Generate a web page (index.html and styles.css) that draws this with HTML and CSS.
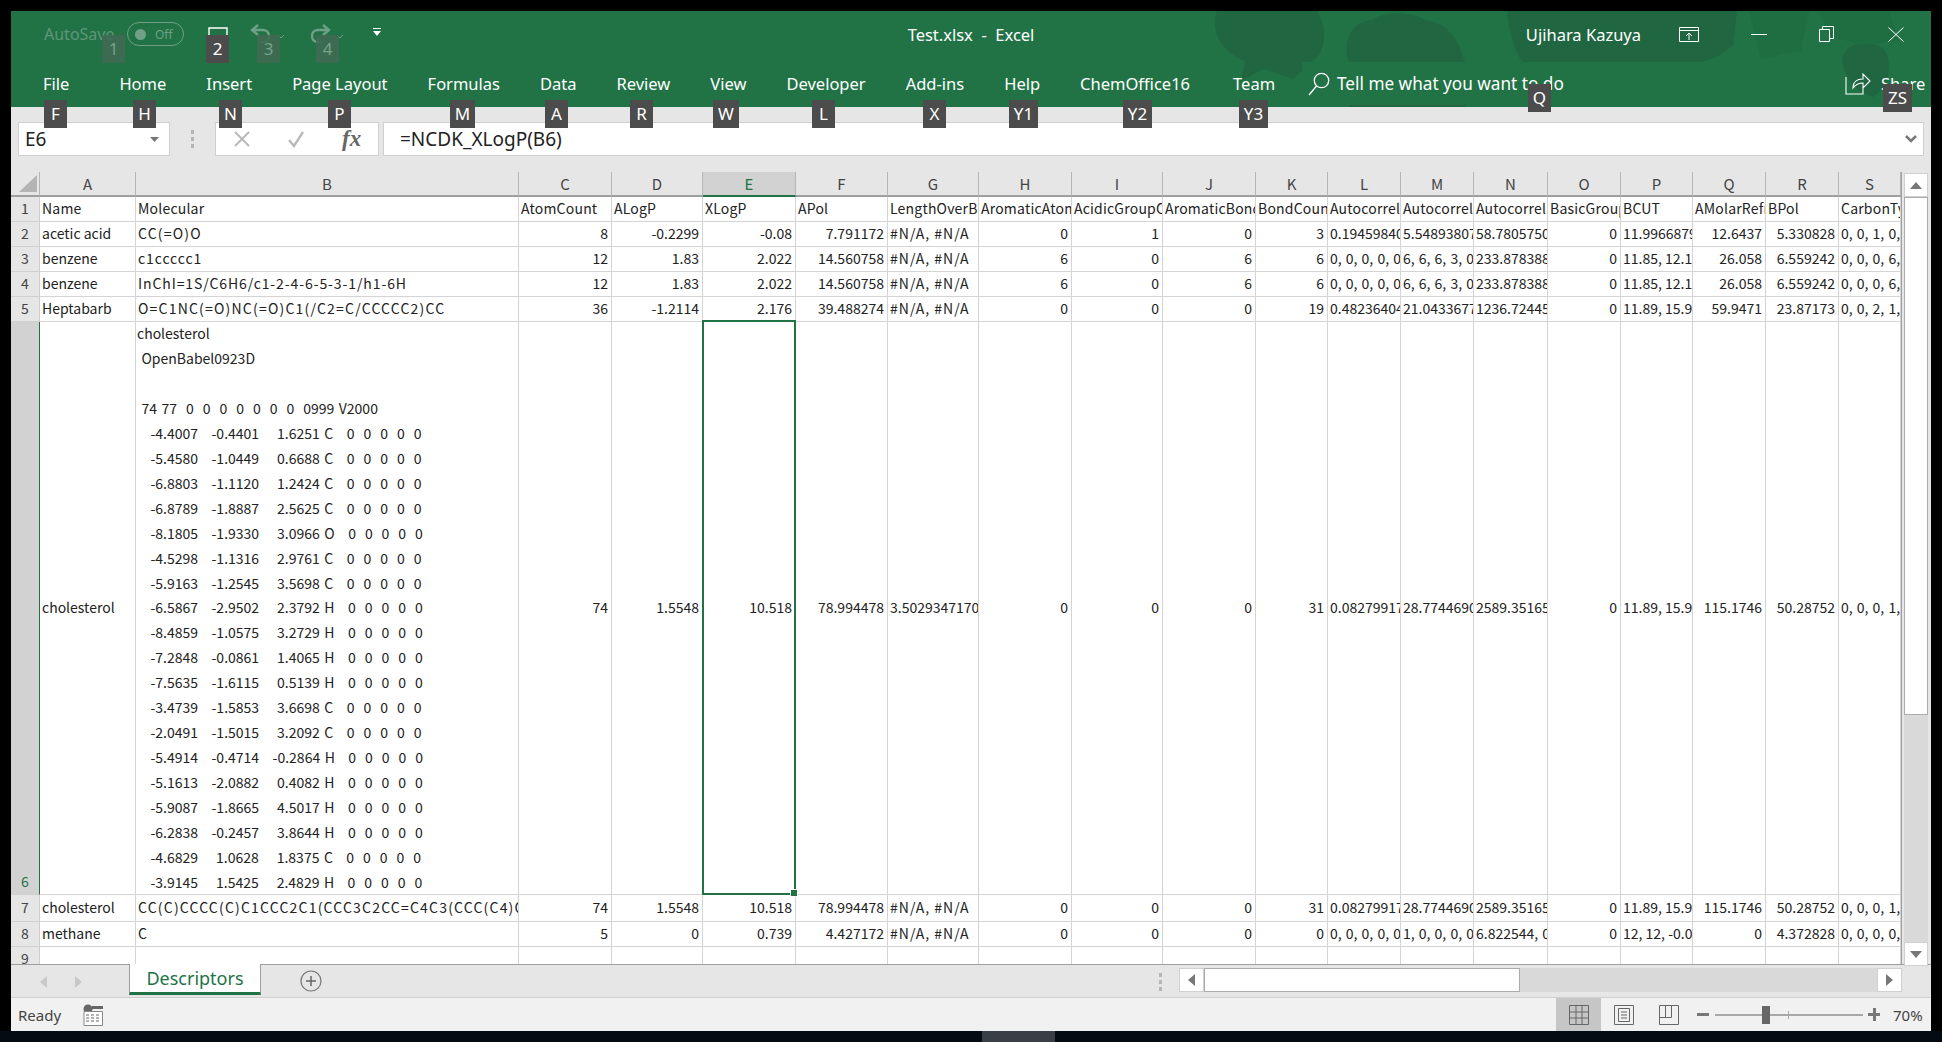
FILE: index.html
```html
<!DOCTYPE html>
<html lang="en">
<head>
    <meta charset="UTF-8">
    <title>Test.xlsx - Excel</title>
    <link rel="stylesheet" href="styles.css">
</head>
<body>
    <div class="window">
        <!-- Ribbon -->
        <header class="ribbon">
            <svg class="clouds" width="720" height="96" viewBox="0 0 720 96">
                <path d="M8 0h100c8 12 10 30 2 44l-26 24-30-10-22 12 4-20C14 42 0 20 8 0z"/>
                <path d="M140 51c-8-22 4-42 24-42 8-9 40-9 52 0 18 2 32 14 40 42v45H140z"/>
                <path d="M298 0h230l-4 34c-14 14-30 18-46 18H314c-10-14-14-34-16-52z"/>
                <path d="M634 44c6-14 32-16 42-4 8 12 4 36-12 46-16-4-34-24-30-42z"/>
                <path class="cloud-light" d="M540 0h60l-8 40-40 8zM610 0h70l10 30-40 4-30-10z"/>
            </svg>
            <div class="title-row">
                <div class="quick-access">
                    <span class="autosave">AutoSave</span>
                    <span class="toggle"><i class="toggle-dot"></i>Off</span>
                    <svg class="qa-save" width="20" height="20" viewBox="0 0 20 20"><path d="M1 19V1h18v18" fill="none" stroke="#fff" stroke-width="1.4"/></svg>
                    <svg class="qa-undo" width="24" height="24" viewBox="0 0 24 24"><path d="M9 3 3 8l6 5M3 8h11c4 0 6 3 6 6s-2 6-6 6h-3" fill="none" stroke="#6fa085" stroke-width="2.4"/></svg>
                    <svg class="qa-chev" width="8" height="5" viewBox="0 0 8 5"><path d="m1 1 3 3 3-3" fill="none" stroke="#6fa085"/></svg>
                    <svg class="qa-redo" width="24" height="24" viewBox="0 0 24 24"><path d="m15 3 6 5-6 5M21 8H10c-4 0-6 3-6 6s2 6 6 6h3" fill="none" stroke="#6fa085" stroke-width="2.4"/></svg>
                    <svg class="qa-chev" width="8" height="5" viewBox="0 0 8 5"><path d="m1 1 3 3 3-3" fill="none" stroke="#6fa085"/></svg>
                    <svg class="qa-more" width="8" height="8" viewBox="0 0 8 8"><path d="M0 0h8v1H0zM0 3h8L4 8z" fill="#fff"/></svg>
                </div>
                <div class="doc-title">Test.xlsx&nbsp; -&nbsp; Excel</div>
                <div class="window-controls">
                    <span class="user-name">Ujihara Kazuya</span>
                    <svg class="ctl-display" width="20" height="15" viewBox="0 0 20 15"><path d="M.5.5h19v14H.5zM.5 3.5h19M10 13V6M7 9l3-3 3 3" fill="none" stroke="#fff"/></svg>
                    <svg class="ctl-min" width="16" height="1" viewBox="0 0 16 1"><path d="M0 .5h16" stroke="#fff"/></svg>
                    <svg class="ctl-restore" width="15" height="16" viewBox="0 0 15 16"><path d="M.5 3.5h10v12H.5zM3.5 3.5v-3h11v12h-4" fill="none" stroke="#fff"/></svg>
                    <svg class="ctl-close" width="16" height="15" viewBox="0 0 16 15"><path d="m.5.5 15 14M15.5.5l-15 14" fill="none" stroke="#fff"/></svg>
                </div>
            </div>
            <nav class="tab-row">
                <a class="tab tab-file">File</a>
                <a class="tab">Home</a>
                <a class="tab">Insert</a>
                <a class="tab">Page Layout</a>
                <a class="tab">Formulas</a>
                <a class="tab">Data</a>
                <a class="tab">Review</a>
                <a class="tab">View</a>
                <a class="tab">Developer</a>
                <a class="tab">Add-ins</a>
                <a class="tab">Help</a>
                <a class="tab">ChemOffice16</a>
                <a class="tab tab-team">Team</a>
                <div class="tell-me">
                    <svg width="22" height="24" viewBox="0 0 22 24"><circle cx="13.5" cy="8.5" r="7.2" fill="none" stroke="#fff" stroke-width="1.3"/><path d="M8.5 14 1 23" stroke="#fff" stroke-width="1.3"/></svg>
                    <span>Tell me what you want to do</span>
                </div>
                <div class="share">
                    <svg width="26" height="24" viewBox="0 0 26 24"><path d="M1 6v17h17v-6M8 17c0-6 4-9 10-9V3l7 7-7 7v-5c-4 0-7 1-10 5z" fill="none" stroke="#fff" stroke-width="1.1"/></svg>
                    <span>Share</span>
                </div>
            </nav>
        </header>

        <!-- Key tips -->
        <span class="tip tip-off tip-top tip-1">1</span>
        <span class="tip tip-top tip-2">2</span>
        <span class="tip tip-off tip-top tip-3">3</span>
        <span class="tip tip-off tip-top tip-4">4</span>
        <span class="tip tip-mid tip-f">F</span>
        <span class="tip tip-mid tip-h">H</span>
        <span class="tip tip-mid tip-n">N</span>
        <span class="tip tip-mid tip-p">P</span>
        <span class="tip tip-mid tip-m">M</span>
        <span class="tip tip-mid tip-a">A</span>
        <span class="tip tip-mid tip-r">R</span>
        <span class="tip tip-mid tip-w">W</span>
        <span class="tip tip-mid tip-l">L</span>
        <span class="tip tip-mid tip-x">X</span>
        <span class="tip tip-mid tip-y1">Y1</span>
        <span class="tip tip-mid tip-y2">Y2</span>
        <span class="tip tip-mid tip-y3">Y3</span>
        <span class="tip tip-high tip-q">Q</span>
        <span class="tip tip-high tip-zs">ZS</span>

        <!-- Formula bar -->
        <div class="formula-bar">
            <div class="name-box">E6<svg width="9" height="5" viewBox="0 0 9 5"><path d="M0 0h9L4.500 5z" fill="#777"/></svg></div>
            <div class="grip"><i></i><i></i><i></i></div>
            <div class="fx-box">
                <svg width="18" height="18" viewBox="0 0 18 18"><path d="m2 2 14 14M16 2 2 16" stroke="#b9b9b9" stroke-width="2"/></svg>
                <svg width="18" height="18" viewBox="0 0 18 18"><path d="m2 10 5 6L16 2" fill="none" stroke="#b9b9b9" stroke-width="2.400"/></svg>
                <span class="fx">fx</span>
            </div>
            <div class="formula-input">=NCDK_XLogP(B6)<svg width="12" height="8" viewBox="0 0 12 8"><path d="m1 1 5 5 5-5" fill="none" stroke="#777" stroke-width="2.500"/></svg></div>
        </div>

        <!-- Sheet -->
        <div class="sheet">
            <div class="grid-wrap">
                <table class="grid">
                    <colgroup>
                        <col class="w-head"><col class="w-a"><col class="w-b"><col class="w-c"><col class="w-d">
                        <col class="w-e"><col class="w-f"><col class="w-g"><col class="w-h"><col class="w-i">
                        <col class="w-j"><col class="w-k"><col class="w-l"><col class="w-m"><col class="w-n">
                        <col class="w-o"><col class="w-p"><col class="w-q"><col class="w-r"><col class="w-s">
                    </colgroup>
                    <thead>
                        <tr class="row-cols">
                            <th class="corner"><svg width="18" height="17" viewBox="0 0 18 17"><path d="M18 0v17H0z" fill="#b4b4b4"/></svg></th>
                            <th>A</th><th>B</th><th>C</th><th>D</th><th class="col-active">E</th><th>F</th><th>G</th><th>H</th><th>I</th>
                            <th>J</th><th>K</th><th>L</th><th>M</th><th>N</th><th>O</th><th>P</th><th>Q</th><th>R</th><th>S</th>
                        </tr>
                    </thead>
                    <tbody>
                        <tr class="row-labels">
                            <th>1</th><td>Name</td><td>Molecular</td><td>AtomCount</td><td>ALogP</td><td>XLogP</td><td>APol</td><td>LengthOverBreadth</td><td>AromaticAtomCount</td><td>AcidicGroupCount</td>
                            <td>AromaticBondCount</td><td>BondCount</td><td>Autocorrelation</td><td>Autocorrelation</td><td>Autocorrelation</td><td>BasicGroupCount</td><td>BCUT</td><td>AMolarRefractivity</td><td>BPol</td><td>CarbonTypes</td>
                        </tr>
                        <tr>
                            <th>2</th><td>acetic acid</td><td class="smiles">CC(=O)O</td><td class="num">8</td><td class="num">-0.2299</td><td class="num">-0.08</td><td class="num">7.791172</td><td class="na">#N/A, #N/A</td><td class="num">0</td><td class="num">1</td>
                            <td class="num">0</td><td class="num">3</td><td>0.19459840</td><td>5.54893807</td><td>58.7805750</td><td class="num">0</td><td>11.9966879</td><td class="num">12.6437</td><td class="num">5.330828</td><td class="list">0, 0, 1, 0, 0</td>
                        </tr>
                        <tr>
                            <th>3</th><td>benzene</td><td class="smiles-thin">c1ccccc1</td><td class="num">12</td><td class="num">1.83</td><td class="num">2.022</td><td class="num">14.560758</td><td class="na">#N/A, #N/A</td><td class="num">6</td><td class="num">0</td>
                            <td class="num">6</td><td class="num">6</td><td class="list">0, 0, 0, 0, 0</td><td class="list">6, 6, 6, 3, 0</td><td>233.878388</td><td class="num">0</td><td>11.85, 12.15</td><td class="num">26.058</td><td class="num">6.559242</td><td class="list">0, 0, 0, 6, 0</td>
                        </tr>
                        <tr>
                            <th>4</th><td>benzene</td><td class="smiles-thin">InChI=1S/C6H6/c1-2-4-6-5-3-1/h1-6H</td><td class="num">12</td><td class="num">1.83</td><td class="num">2.022</td><td class="num">14.560758</td><td class="na">#N/A, #N/A</td><td class="num">6</td><td class="num">0</td>
                            <td class="num">6</td><td class="num">6</td><td class="list">0, 0, 0, 0, 0</td><td class="list">6, 6, 6, 3, 0</td><td>233.878388</td><td class="num">0</td><td>11.85, 12.15</td><td class="num">26.058</td><td class="num">6.559242</td><td class="list">0, 0, 0, 6, 0</td>
                        </tr>
                        <tr>
                            <th>5</th><td>Heptabarb</td><td class="smiles">O=C1NC(=O)NC(=O)C1(/C2=C/CCCCC2)CC</td><td class="num">36</td><td class="num">-1.2114</td><td class="num">2.176</td><td class="num">39.488274</td><td class="na">#N/A, #N/A</td><td class="num">0</td><td class="num">0</td>
                            <td class="num">0</td><td class="num">19</td><td>0.48236404</td><td>21.0433677</td><td>1236.72445</td><td class="num">0</td><td>11.89, 15.99</td><td class="num">59.9471</td><td class="num">23.87173</td><td class="list">0, 0, 2, 1, 0</td>
                        </tr>
                        <tr class="row-tall">
                            <th class="row-active">6</th><td>cholesterol</td>
                            <td class="molfile"><div class="molfile-text">cholesterol
 OpenBabel0923D

 74 77  0  0  0  0  0  0  0  0999 V2000
   -4.4007   -0.4401    1.6251 C   0  0  0  0  0
   -5.4580   -1.0449    0.6688 C   0  0  0  0  0
   -6.8803   -1.1120    1.2424 C   0  0  0  0  0
   -6.8789   -1.8887    2.5625 C   0  0  0  0  0
   -8.1805   -1.9330    3.0966 O   0  0  0  0  0
   -4.5298   -1.1316    2.9761 C   0  0  0  0  0
   -5.9163   -1.2545    3.5698 C   0  0  0  0  0
   -6.5867   -2.9502    2.3792 H   0  0  0  0  0
   -8.4859   -1.0575    3.2729 H   0  0  0  0  0
   -7.2848   -0.0861    1.4065 H   0  0  0  0  0
   -7.5635   -1.6115    0.5139 H   0  0  0  0  0
   -3.4739   -1.5853    3.6698 C   0  0  0  0  0
   -2.0491   -1.5015    3.2092 C   0  0  0  0  0
   -5.4914   -0.4714   -0.2864 H   0  0  0  0  0
   -5.1613   -2.0882    0.4082 H   0  0  0  0  0
   -5.9087   -1.8665    4.5017 H   0  0  0  0  0
   -6.2838   -0.2457    3.8644 H   0  0  0  0  0
   -4.6829    1.0628    1.8375 C   0  0  0  0  0
   -3.9145    1.5425    2.4829 H   0  0  0  0  0</div></td>
                            <td class="num">74</td><td class="num">1.5548</td>
                            <td class="num cell-active">10.518<span class="selection"><i class="fill-handle"></i></span></td>
                            <td class="num">78.994478</td><td>3.50293471700</td><td class="num">0</td><td class="num">0</td>
                            <td class="num">0</td><td class="num">31</td><td>0.08279917</td><td>28.7744690</td><td>2589.35165</td><td class="num">0</td><td>11.89, 15.99</td><td class="num">115.1746</td><td class="num">50.28752</td><td class="list">0, 0, 0, 1, 0</td>
                        </tr>
                        <tr class="row-seven">
                            <th>7</th><td>cholesterol</td><td class="smiles">CC(C)CCCC(C)C1CCC2C1(CCC3C2CC=C4C3(CCC(C4)O)C)C</td><td class="num">74</td><td class="num">1.5548</td><td class="num">10.518</td><td class="num">78.994478</td><td class="na">#N/A, #N/A</td><td class="num">0</td><td class="num">0</td>
                            <td class="num">0</td><td class="num">31</td><td>0.08279917</td><td>28.7744690</td><td>2589.35165</td><td class="num">0</td><td>11.89, 15.99</td><td class="num">115.1746</td><td class="num">50.28752</td><td class="list">0, 0, 0, 1, 0</td>
                        </tr>
                        <tr>
                            <th>8</th><td>methane</td><td>C</td><td class="num">5</td><td class="num">0</td><td class="num">0.739</td><td class="num">4.427172</td><td class="na">#N/A, #N/A</td><td class="num">0</td><td class="num">0</td>
                            <td class="num">0</td><td class="num">0</td><td class="list">0, 0, 0, 0, 0</td><td class="list">1, 0, 0, 0, 0</td><td class="list">6.822544, 0</td><td class="num">0</td><td>12, 12, -0.01</td><td class="num">0</td><td class="num">4.372828</td><td class="list">0, 0, 0, 0, 0</td>
                        </tr>
                        <tr>
                            <th>9</th><td></td><td></td><td></td><td></td><td></td><td></td><td></td><td></td><td></td>
                            <td></td><td></td><td></td><td></td><td></td><td></td><td></td><td></td><td></td><td></td>
                        </tr>
                    </tbody>
                </table>
            </div>
            <div class="v-scroll">
                <div class="scroll-btn"><svg width="12" height="7" viewBox="0 0 12 7"><path d="M6 0l6 7H0z" fill="#777"/></svg></div>
                <div class="v-thumb"></div>
                <div class="v-track"></div>
                <div class="scroll-btn"><svg width="12" height="7" viewBox="0 0 12 7"><path d="M0 0h12L6 7z" fill="#777"/></svg></div>
            </div>
        </div>

        <!-- Sheet tabs -->
        <div class="sheet-bar">
            <div class="sheet-nav">
                <svg width="7" height="12" viewBox="0 0 7 12"><path d="M7 0v12L0 6z" fill="#c9c9c9"/></svg>
                <svg width="7" height="12" viewBox="0 0 7 12"><path d="M0 0v12l7-6z" fill="#c9c9c9"/></svg>
            </div>
            <div class="sheet-tab">Descriptors</div>
            <svg class="add-sheet" width="22" height="22" viewBox="0 0 22 22"><circle cx="11" cy="11" r="10" fill="none" stroke="#777" stroke-width="1.200"/><path d="M11 6v10M6 11h10" stroke="#666" stroke-width="1.500"/></svg>
            <div class="grip grip-bar"><i></i><i></i><i></i></div>
            <div class="h-scroll">
                <div class="scroll-btn-h"><svg width="7" height="12" viewBox="0 0 7 12"><path d="M7 0v12L0 6z" fill="#777"/></svg></div>
                <div class="h-thumb"></div>
                <div class="h-track"></div>
                <div class="scroll-btn-h"><svg width="7" height="12" viewBox="0 0 7 12"><path d="M0 0v12l7-6z" fill="#777"/></svg></div>
            </div>
        </div>

        <!-- Status bar -->
        <footer class="status-bar">
            <span class="ready">Ready</span>
            <svg class="macro-icon" width="20" height="22" viewBox="0 0 20 22"><circle cx="5" cy="5" r="4.500" fill="#666"/><path d="M9 2h11v3H9z" fill="#666"/><path d="M1 7.500h18.500v14H1z" fill="#fff" stroke="#888"/><path d="M3 11h3M8 11h3M13 11h3M3 14h3M8 14h3M13 14h3M3 17h3M8 17h3M13 17h3" stroke="#666"/></svg>
            <div class="status-right">
                <div class="view-btn view-active"><svg width="20" height="20" viewBox="0 0 20 20"><path d="M.5.5h19v19H.5zM.5 7h19M.5 13h19M7 .5v19M13 .5v19" fill="none" stroke="#666"/></svg></div>
                <div class="view-btn"><svg width="20" height="20" viewBox="0 0 20 20"><path d="M.5.5h19v19H.5zM4.500 3.500h11v13h-11zM7 7h6M7 10h6M7 13h6" fill="none" stroke="#666"/></svg></div>
                <div class="view-btn"><svg width="20" height="20" viewBox="0 0 20 20"><path d="M.5.5h19v19H.5zM.5 12.500h12V.5M6.500.5v12" fill="none" stroke="#666"/></svg></div>
                <div class="zoom-slider">
                    <i class="zoom-minus"></i>
                    <div class="zoom-track"><i class="zoom-tick"></i><i class="zoom-thumb"></i></div>
                    <i class="zoom-plus"></i>
                </div>
                <span class="zoom-value">70%</span>
            </div>
        </footer>
    </div>

    <!-- Taskbar strip below the window -->
    <div class="taskbar"><i class="taskbar-app"></i><span class="taskbar-clock">12:44 PM</span></div>
</body>
</html>
```

FILE: styles.css
```css
/* General Styles */
html, body {
    margin: 0;
    padding: 0;
    height: 1042px;
    overflow: hidden;
    background-color: #000;
}

body {
    font-family: "Noto Sans", Arial, sans-serif;
    color: #222;
}

.window {
    position: relative;
    margin: 11px 11px 0;
    width: 1920px;
    height: 1020px;
    background-color: #e6e6e6;
    display: flex;
    flex-direction: column;
    overflow: hidden;
}

/* Ribbon */
.ribbon {
    position: relative;
    height: 96px;
    flex: none;
    background-color: #217346;
    color: #fff;
    overflow: hidden;
}

.clouds {
    position: absolute;
    top: 0;
    left: 1198px;
    fill: #1f5f3e;
    opacity: .6;
}

.clouds .cloud-light {
    fill: #1f6b41;
}

.title-row {
    position: relative;
    height: 51px;
    box-sizing: border-box;
    padding-bottom: 5px;
    display: flex;
    align-items: center;
}

.quick-access, .window-controls {
    flex: 1;
    display: flex;
    align-items: center;
}

.quick-access {
    padding-left: 33px;
}

.autosave {
    font-size: 16px;
    color: #5f9679;
    width: 83px;
}

.toggle {
    width: 57px;
    height: 24px;
    box-sizing: border-box;
    border: 1px solid #6fa085;
    border-radius: 12px;
    display: flex;
    align-items: center;
    gap: 9px;
    padding-left: 7px;
    font-size: 12px;
    color: #6fa085;
}

.toggle-dot {
    width: 11px;
    height: 11px;
    border-radius: 50%;
    background-color: #6fa085;
}

.qa-save {
    margin-left: 24px;
    margin-top: 6px;
}

.qa-undo {
    margin-left: 21px;
}

.qa-redo {
    margin-left: 23px;
}

.qa-chev {
    margin-left: 4px;
    margin-top: 4px;
}

.qa-more {
    margin-left: 29px;
    margin-top: -4px;
}

.doc-title {
    font-size: 16.500px;
    white-space: nowrap;
    margin-left: -6px;
}

.window-controls {
    justify-content: flex-end;
    padding-right: 27px;
}

.user-name {
    font-size: 16.500px;
    margin-right: 38px;
}

.ctl-min {
    margin-left: 52px;
}

.ctl-restore {
    margin-left: 52px;
}

.ctl-close {
    margin-left: 54px;
}

.tab-row {
    position: relative;
    height: 45px;
    display: flex;
    align-items: center;
    gap: 40px;
    padding-left: 32px;
    padding-bottom: 2px;
    box-sizing: border-box;
    font-size: 16.500px;
}

.tab {
    white-space: nowrap;
}

.tab-file {
    margin-right: 10px;
}

.tab-team {
    margin-left: 3px;
}

.tell-me {
    position: absolute;
    left: 1291px;
    top: 0;
    width: 450px;
    height: 43px;
    padding-bottom: 0;
    background-color: #217346;
    display: flex;
    align-items: center;
    gap: 7px;
    padding-left: 6px;
    box-sizing: border-box;
    font-size: 17.200px;
}

.share {
    position: absolute;
    left: 1834px;
    top: 9px;
    display: flex;
    align-items: center;
    gap: 10px;
}

/* Key tips */
.tip {
    position: absolute;
    height: 28px;
    background-color: #4c4c4c;
    color: #fff;
    font-size: 17px;
    line-height: 27px;
    text-align: center;
}

.tip-off {
    background-color: #3f6b54;
    color: #7fa892;
    opacity: .9;
}

.tip-top { top: 24px; }
.tip-mid { top: 89px; }
.tip-high { top: 73px; }

.tip-1 { left: 91px; width: 23px; }
.tip-2 { left: 195px; width: 23px; }
.tip-3 { left: 246px; width: 23px; }
.tip-4 { left: 305px; width: 23px; }
.tip-f { left: 33px; width: 23px; }
.tip-h { left: 122px; width: 23px; }
.tip-n { left: 208px; width: 23px; }
.tip-p { left: 317px; width: 23px; }
.tip-m { left: 439px; width: 25px; }
.tip-a { left: 534px; width: 23px; }
.tip-r { left: 619px; width: 23px; }
.tip-w { left: 702px; width: 26px; }
.tip-l { left: 801px; width: 23px; }
.tip-x { left: 912px; width: 23px; }
.tip-y1 { left: 998px; width: 29px; }
.tip-y2 { left: 1112px; width: 29px; }
.tip-y3 { left: 1228px; width: 29px; }
.tip-q { left: 1517px; width: 23px; }
.tip-zs { left: 1872px; width: 29px; }

/* Formula bar */
.formula-bar {
    height: 65px;
    flex: none;
    box-sizing: border-box;
    padding: 15px 7px 16px;
    display: flex;
    align-items: stretch;
}

.name-box, .fx-box, .formula-input {
    box-sizing: border-box;
    background-color: #fff;
    border: 1px solid #cfcfcf;
    display: flex;
    align-items: center;
}

.name-box {
    width: 152px;
    padding: 0 10px 0 6px;
    justify-content: space-between;
    font-size: 19px;
}

.grip {
    width: 45px;
    display: flex;
    flex-direction: column;
    align-items: center;
    justify-content: center;
    gap: 3px;
}

.grip i {
    width: 3px;
    height: 4px;
    background-color: #b5b5b5;
}

.fx-box {
    width: 164px;
    padding-left: 17px;
    gap: 36px;
}

.fx {
    font-family: "Liberation Serif", serif;
    font-style: italic;
    font-weight: bold;
    font-size: 23px;
    color: #666;
    margin-left: 1px;
}

.formula-input {
    flex: 1;
    margin-left: 4px;
    padding: 0 6px 0 16px;
    justify-content: space-between;
    font-size: 19px;
}

/* Sheet */
.sheet {
    height: 792px;
    flex: none;
    display: flex;
}

.grid-wrap {
    width: 1890px;
    height: 792px;
    overflow: hidden;
    border-right: 1px solid #9f9f9f;
}

.grid {
    table-layout: fixed;
    width: 1890px;
    border-collapse: separate;
    border-spacing: 0;
    font-family: "Noto Sans CJK JP", sans-serif;
    font-size: 14px;
    color: #222;
}

.w-head { width: 29px; }
.w-a { width: 96px; }
.w-b { width: 383px; }
.w-c { width: 93px; }
.w-d { width: 91px; }
.w-e { width: 93px; }
.w-f { width: 92px; }
.w-g { width: 91px; }
.w-h { width: 93px; }
.w-i { width: 91px; }
.w-j { width: 93px; }
.w-k { width: 72px; }
.w-l { width: 73px; }
.w-m { width: 73px; }
.w-n { width: 74px; }
.w-o { width: 73px; }
.w-p { width: 72px; }
.w-q { width: 73px; }
.w-r { width: 73px; }
.w-s { width: 62px; }

.grid tr {
    height: 25px;
}

.grid th, .grid td {
    box-sizing: border-box;
    padding: 0 3px 2px 2px;
    overflow: hidden;
    white-space: nowrap;
    line-height: 22px;
    border-right: 1px solid #d4d4d4;
    border-bottom: 1px solid #d4d4d4;
    background-color: #fff;
    text-align: left;
    vertical-align: middle;
    font-weight: normal;
}

.grid th {
    background-color: #e6e6e6;
    text-align: center;
    color: #444;
    padding: 0 0 2px;
    border-color: #cfcfcf;
}

.grid thead th {
    border-right-color: #b5b5b5;
    border-bottom: 2px solid #9f9f9f;
    font-size: 15px;
    padding: 0;
    line-height: 23px;
}

.grid .corner {
    text-align: right;
    padding-right: 2px;
    line-height: 0;
}

.grid .col-active {
    background-color: #d2d2d2;
    color: #217346;
    border-bottom-color: #217346;
}

.grid .row-labels td {
    letter-spacing: .2px;
}

.grid td.num {
    text-align: right;
}

.grid td.smiles {
    letter-spacing: 1.200px;
}

.grid td.smiles-thin {
    letter-spacing: .9px;
}

.grid td.na {
    letter-spacing: 1px;
}

.grid td.list {
    word-spacing: 1px;
}

.grid .row-tall {
    height: 573px;
}

.grid .row-seven {
    height: 27px;
}

.grid th.row-active {
    background-color: #d2d2d2;
    color: #217346;
    vertical-align: bottom;
    border-right: 1px solid #217346;
}

.grid td.molfile {
    vertical-align: top;
    padding: 0 2px 0 1px;
}

.molfile-text {
    height: 572px;
    margin-top: -1px;
    white-space: pre;
    line-height: 24.950px;
    word-spacing: 1.350px;
}

.grid td.cell-active {
    position: relative;
    overflow: visible;
}

.selection {
    position: absolute;
    top: -2px;
    left: -1px;
    right: -1px;
    bottom: -1px;
    border: 2px solid #217346;
    pointer-events: none;
}

.fill-handle {
    position: absolute;
    right: -4px;
    bottom: -4px;
    width: 6px;
    height: 6px;
    background-color: #217346;
    border: 1px solid #fff;
}

/* Scrollbars */
.v-scroll {
    width: 24px;
    margin: 1px 0 0 2px;
    display: flex;
    flex-direction: column;
    height: 793px;
    position: relative;
    z-index: 1;
}

.scroll-btn, .scroll-btn-h, .v-thumb, .h-thumb {
    box-sizing: border-box;
    background-color: #fff;
    border: 1px solid #ababab;
}

.scroll-btn {
    height: 24px;
    flex: none;
    display: flex;
    align-items: center;
    justify-content: center;
    border-color: #d0d0d0;
}

.v-thumb {
    height: 518px;
    flex: none;
}

.v-track {
    flex: 1;
    background-color: #d9d9d9;
}

/* Sheet tabs */
.sheet-bar {
    height: 34px;
    flex: none;
    box-sizing: border-box;
    border-top: 1px solid #9f9f9f;
    border-bottom: 1px solid #cfcfcf;
    display: flex;
    align-items: flex-start;
}

.sheet-nav {
    width: 118px;
    height: 33px;
    display: flex;
    align-items: center;
    gap: 28px;
    padding-left: 29px;
    box-sizing: border-box;
}

.sheet-tab {
    width: 132px;
    height: 31px;
    margin-top: -1px;
    box-sizing: border-box;
    background-color: #fff;
    border-left: 1px solid #9f9f9f;
    border-right: 1px solid #9f9f9f;
    border-bottom: 3px solid #217346;
    color: #217346;
    font-size: 18px;
    line-height: 28px;
    text-align: center;
}

.add-sheet {
    margin-left: 39px;
    margin-top: 5px;
}

.grip-bar {
    width: 9px;
    height: 33px;
    margin-left: 834px;
}

.h-scroll {
    margin-left: 14px;
    margin-top: 3px;
    width: 723px;
    height: 24px;
    display: flex;
    background-color: #d9d9d9;
}

.scroll-btn-h {
    width: 25px;
    flex: none;
    display: flex;
    align-items: center;
    justify-content: center;
    border-color: #d0d0d0;
}

.h-thumb {
    width: 316px;
    flex: none;
}

.h-track {
    flex: 1;
}

/* Status bar */
.status-bar {
    height: 33px;
    flex: none;
    background-color: #f1f1f1;
    display: flex;
    align-items: center;
    padding-left: 7px;
    font-size: 15px;
    color: #444;
}

.ready {
    width: 65px;
}

.status-right {
    margin-left: auto;
    height: 100%;
    display: flex;
    align-items: center;
}

.view-btn {
    width: 45px;
    height: 100%;
    display: flex;
    align-items: center;
    justify-content: center;
}

.view-active {
    background-color: #c6c6c6;
}

.zoom-slider {
    display: flex;
    align-items: center;
    margin-left: 6px;
}

.zoom-minus, .zoom-plus {
    position: relative;
    display: block;
    width: 12px;
    height: 3px;
    background-color: #777;
}

.zoom-plus::after {
    content: "";
    position: absolute;
    left: 5px;
    top: -5px;
    width: 3px;
    height: 13px;
    background-color: #777;
}

.zoom-track {
    position: relative;
    width: 148px;
    height: 2px;
    margin: 0 5px 0 6px;
    background-color: #a8a8a8;
}

.zoom-tick {
    position: absolute;
    left: 73px;
    top: -3px;
    width: 1px;
    height: 8px;
    background-color: #a8a8a8;
}

.zoom-thumb {
    position: absolute;
    left: 47px;
    top: -8px;
    width: 8px;
    height: 18px;
    background-color: #666;
}

.zoom-value {
    margin-left: 13px;
    width: 38px;
    font-size: 15px;
    white-space: nowrap;
}

/* Taskbar */
.taskbar {
    position: relative;
    height: 11px;
    background-color: #050b12;
    overflow: hidden;
}

.taskbar-app {
    position: absolute;
    left: 982px;
    top: 0;
    width: 73px;
    height: 11px;
    background-color: #3a3f47;
}

.taskbar-clock {
    position: absolute;
    left: 1766px;
    top: 7px;
    font-size: 13px;
    color: #fff;
    white-space: nowrap;
}
```
